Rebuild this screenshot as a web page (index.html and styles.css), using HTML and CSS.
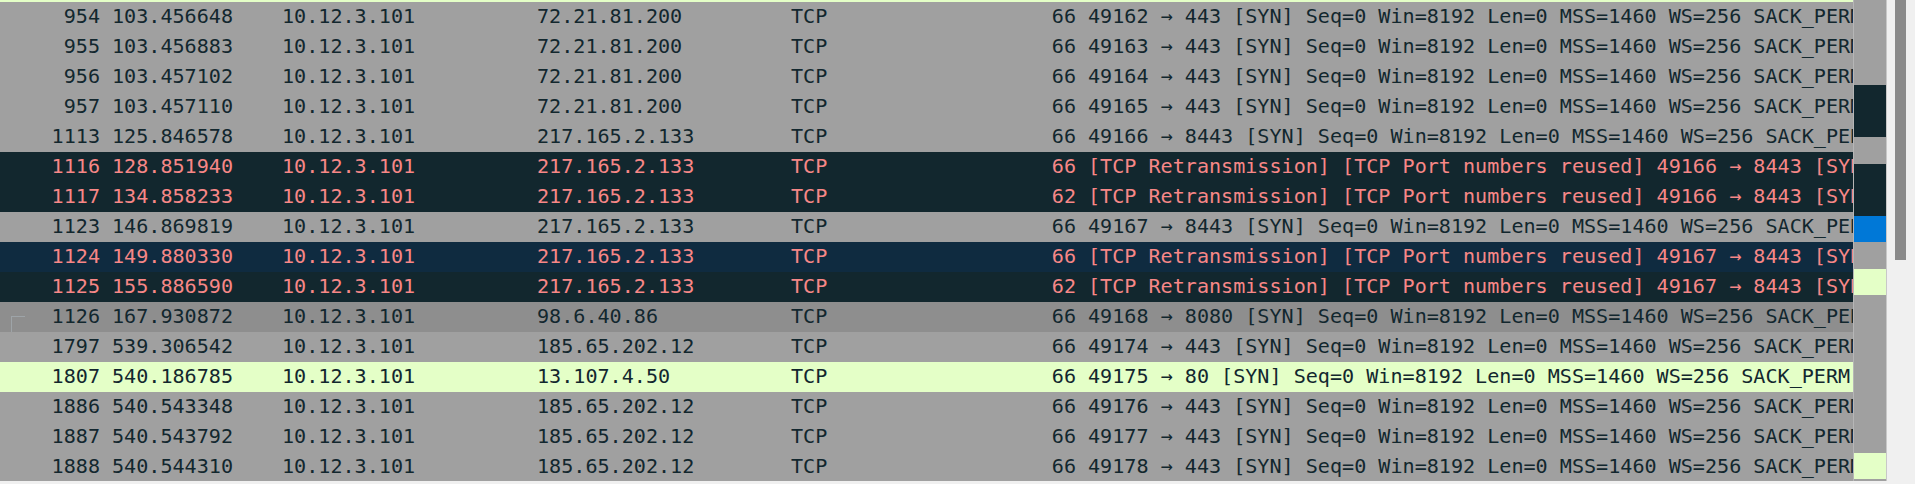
FILE: index.html
```html
<!DOCTYPE html>
<html>
<head>
<meta charset="utf-8">
<link rel="stylesheet" href="styles.css">
</head>
<body>
<div class="app">
  <div class="list">
    <div class="partial"></div>
    <div class="row gray"><span class="c no">954</span><span class="c">103.456648</span><span class="c">10.12.3.101</span><span class="c">72.21.81.200</span><span class="c">TCP</span><span class="c len">66</span><span class="c info">49162 → 443 [SYN] Seq=0 Win=8192 Len=0 MSS=1460 WS=256 SACK_PERM</span></div>
    <div class="row gray"><span class="c no">955</span><span class="c">103.456883</span><span class="c">10.12.3.101</span><span class="c">72.21.81.200</span><span class="c">TCP</span><span class="c len">66</span><span class="c info">49163 → 443 [SYN] Seq=0 Win=8192 Len=0 MSS=1460 WS=256 SACK_PERM</span></div>
    <div class="row gray"><span class="c no">956</span><span class="c">103.457102</span><span class="c">10.12.3.101</span><span class="c">72.21.81.200</span><span class="c">TCP</span><span class="c len">66</span><span class="c info">49164 → 443 [SYN] Seq=0 Win=8192 Len=0 MSS=1460 WS=256 SACK_PERM</span></div>
    <div class="row gray"><span class="c no">957</span><span class="c">103.457110</span><span class="c">10.12.3.101</span><span class="c">72.21.81.200</span><span class="c">TCP</span><span class="c len">66</span><span class="c info">49165 → 443 [SYN] Seq=0 Win=8192 Len=0 MSS=1460 WS=256 SACK_PERM</span></div>
    <div class="row gray"><span class="c no">1113</span><span class="c">125.846578</span><span class="c">10.12.3.101</span><span class="c">217.165.2.133</span><span class="c">TCP</span><span class="c len">66</span><span class="c info">49166 → 8443 [SYN] Seq=0 Win=8192 Len=0 MSS=1460 WS=256 SACK_PERM</span></div>
    <div class="row bad"><span class="c no">1116</span><span class="c">128.851940</span><span class="c">10.12.3.101</span><span class="c">217.165.2.133</span><span class="c">TCP</span><span class="c len">66</span><span class="c info">[TCP Retransmission] [TCP Port numbers reused] 49166 → 8443 [SYN] Seq=0 Win=8192 Len=0 MSS=1460 WS=256 SACK_PERM</span></div>
    <div class="row bad"><span class="c no">1117</span><span class="c">134.858233</span><span class="c">10.12.3.101</span><span class="c">217.165.2.133</span><span class="c">TCP</span><span class="c len">62</span><span class="c info">[TCP Retransmission] [TCP Port numbers reused] 49166 → 8443 [SYN] Seq=0 Win=8192 Len=0 MSS=1460 SACK_PERM</span></div>
    <div class="row gray"><span class="c no">1123</span><span class="c">146.869819</span><span class="c">10.12.3.101</span><span class="c">217.165.2.133</span><span class="c">TCP</span><span class="c len">66</span><span class="c info">49167 → 8443 [SYN] Seq=0 Win=8192 Len=0 MSS=1460 WS=256 SACK_PERM</span></div>
    <div class="row bad hover"><span class="c no">1124</span><span class="c">149.880330</span><span class="c">10.12.3.101</span><span class="c">217.165.2.133</span><span class="c">TCP</span><span class="c len">66</span><span class="c info">[TCP Retransmission] [TCP Port numbers reused] 49167 → 8443 [SYN] Seq=0 Win=8192 Len=0 MSS=1460 WS=256 SACK_PERM</span></div>
    <div class="row bad"><span class="c no">1125</span><span class="c">155.886590</span><span class="c">10.12.3.101</span><span class="c">217.165.2.133</span><span class="c">TCP</span><span class="c len">62</span><span class="c info">[TCP Retransmission] [TCP Port numbers reused] 49167 → 8443 [SYN] Seq=0 Win=8192 Len=0 MSS=1460 SACK_PERM</span></div>
    <div class="row selected"><span class="c no"><span class="tree"></span>1126</span><span class="c">167.930872</span><span class="c">10.12.3.101</span><span class="c">98.6.40.86</span><span class="c">TCP</span><span class="c len">66</span><span class="c info">49168 → 8080 [SYN] Seq=0 Win=8192 Len=0 MSS=1460 WS=256 SACK_PERM</span></div>
    <div class="row gray"><span class="c no">1797</span><span class="c">539.306542</span><span class="c">10.12.3.101</span><span class="c">185.65.202.12</span><span class="c">TCP</span><span class="c len">66</span><span class="c info">49174 → 443 [SYN] Seq=0 Win=8192 Len=0 MSS=1460 WS=256 SACK_PERM</span></div>
    <div class="row http"><span class="c no">1807</span><span class="c">540.186785</span><span class="c">10.12.3.101</span><span class="c">13.107.4.50</span><span class="c">TCP</span><span class="c len">66</span><span class="c info">49175 → 80 [SYN] Seq=0 Win=8192 Len=0 MSS=1460 WS=256 SACK_PERM</span></div>
    <div class="row gray"><span class="c no">1886</span><span class="c">540.543348</span><span class="c">10.12.3.101</span><span class="c">185.65.202.12</span><span class="c">TCP</span><span class="c len">66</span><span class="c info">49176 → 443 [SYN] Seq=0 Win=8192 Len=0 MSS=1460 WS=256 SACK_PERM</span></div>
    <div class="row gray"><span class="c no">1887</span><span class="c">540.543792</span><span class="c">10.12.3.101</span><span class="c">185.65.202.12</span><span class="c">TCP</span><span class="c len">66</span><span class="c info">49177 → 443 [SYN] Seq=0 Win=8192 Len=0 MSS=1460 WS=256 SACK_PERM</span></div>
    <div class="row gray"><span class="c no">1888</span><span class="c">540.544310</span><span class="c">10.12.3.101</span><span class="c">185.65.202.12</span><span class="c">TCP</span><span class="c len">66</span><span class="c info">49178 → 443 [SYN] Seq=0 Win=8192 Len=0 MSS=1460 WS=256 SACK_PERM</span></div>
  </div>
  <div class="minimap">
    <div class="seg m-gray" style="height:85px"></div>
    <div class="seg m-dark" style="height:52px"></div>
    <div class="seg m-gray" style="height:27px"></div>
    <div class="seg m-dark" style="height:52px"></div>
    <div class="seg m-blue" style="height:26px"></div>
    <div class="seg m-gray" style="height:27px"></div>
    <div class="seg m-green" style="height:26px"></div>
    <div class="seg m-gray" style="height:158px"></div>
    <div class="seg m-green" style="height:26px"></div>
    <div class="seg m-gray" style="height:2px"></div>
  </div>
  <div class="scroll">
    <div class="thumb"></div>
  </div>
</div>
</body>
</html>
```
FILE: styles.css
```css
html, body {
  margin: 0;
  padding: 0;
  background: #f0f0f0;
}
body {
  width: 1915px;
  height: 484px;
  overflow: hidden;
  font-family: "DejaVu Sans Mono", "Liberation Mono", monospace;
  font-size: 20.1px;
}
.app {
  display: flex;
  height: 481px;
  overflow: hidden;
}
.list {
  flex: 0 0 1853px;
  display: flex;
  flex-direction: column;
  border-right: 1px solid #b6b6b6;
  overflow: hidden;
}
.partial {
  flex: 0 0 2px;
  background: #e4ffc7;
}
.row {
  flex: 0 0 30px;
  display: grid;
  grid-template-columns: 112px 170px 255px 254px 249px 48px 765px;
  line-height: 28px;
  white-space: nowrap;
  color: #12272e;
  background: #a0a0a0;
}
.c {
  overflow: hidden;
  white-space: pre;
}
.no, .len {
  text-align: right;
  padding-right: 12px;
  position: relative;
}
.gray { background: #a0a0a0; color: #12272e; }
.bad { background: #12272e; color: #f78787; }
.bad.hover { background: #0f2b40; }
.selected { background: #8e8e8e; color: #12272e; }
.http { background: #e4ffc7; color: #12272e; }
.tree {
  position: absolute;
  left: 11px;
  top: 14px;
  width: 14px;
  height: 16px;
  border-top: 1px solid #9ea4a8;
  border-left: 1px solid #9ea4a8;
  box-sizing: border-box;
}
.minimap {
  flex: 0 0 32px;
  display: flex;
  flex-direction: column;
  border-right: 1px solid #c8c8c8;
  overflow: hidden;
}
.seg { flex: 0 0 auto; }
.m-gray { background: #a0a0a0; }
.m-dark { background: #12272e; }
.m-blue { background: #0078d7; }
.m-green { background: #e4ffc7; }
.scroll {
  flex: 1 1 auto;
  background: #f0f0f0;
  display: flex;
  padding-left: 8px;
}
.thumb {
  width: 11px;
  height: 260px;
  background: #8a8a8a;
}
```
